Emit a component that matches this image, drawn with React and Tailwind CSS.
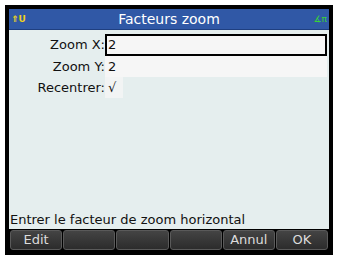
export default function App() {
  const keys = ['Edit', '', '', '', 'Annul', 'OK'];
  return (
    <div className="w-[337px] h-[259px] bg-white pt-[5px] pl-[5px]" style={{ fontFamily: '"DejaVu Sans", sans-serif' }}>
      <div className="w-[328px] h-[250px] border-4 border-black bg-black flex flex-col">
        {/* title bar */}
        <div className="h-[21px] bg-[#3058a6] border-b border-[#1f3f80] flex items-center justify-between px-[2px] relative">
          <span className="text-[9px] leading-none font-bold text-[#f2d21a]">⇑U</span>
          <span className="absolute inset-x-0 text-center text-[14px] leading-none text-white">Facteurs zoom</span>
          <span className="text-[9px] leading-none text-[#39d239]">∡π</span>
        </div>

        {/* form */}
        <div className="flex-1 bg-[#e5eeee] flex flex-col pt-[4px]">
          <div className="flex items-center h-[22px]">
            <div className="w-[96px] text-right text-[13px] text-[#111]">Zoom X:</div>
            <div className="flex-1 h-[22px] border-2 border-black bg-[#f6f6f6] text-[13px] text-[#111] leading-[18px] pl-[1px] mr-[2px]">2</div>
          </div>
          <div className="flex items-center h-[21px]">
            <div className="w-[96px] text-right text-[13px] text-[#111]">Zoom Y:</div>
            <div className="flex-1 h-[21px] bg-[#f6f6f6] text-[13px] text-[#111] leading-[21px] pl-[3px] mr-[2px]">2</div>
          </div>
          <div className="flex items-center h-[21px]">
            <div className="w-[96px] text-right text-[13px] text-[#111]">Recentrer:</div>
            <div className="w-[18px] h-[21px] bg-[#f2f4f4] text-[13px] text-[#111] leading-[21px] pl-[3px]">√</div>
          </div>
          <div className="flex-1" />
          <div className="text-[13px] text-[#111] leading-[16px] pl-[1px] pb-[1px]">Entrer le facteur de zoom horizontal</div>
        </div>

        {/* soft keys */}
        <div className="h-[22px] bg-black flex gap-[1px] px-[1px] pt-[1px]">
          {keys.map((k, i) => (
            <div
              key={i}
              className="flex-1 h-[20px] rounded-[3px] bg-gradient-to-b from-[#444] to-[#2c2c2c] border border-[#5a5a5a] flex items-center justify-center text-[13px] text-[#dcdcdc]"
            >
              {k}
            </div>
          ))}
        </div>
      </div>
    </div>
  );
}
